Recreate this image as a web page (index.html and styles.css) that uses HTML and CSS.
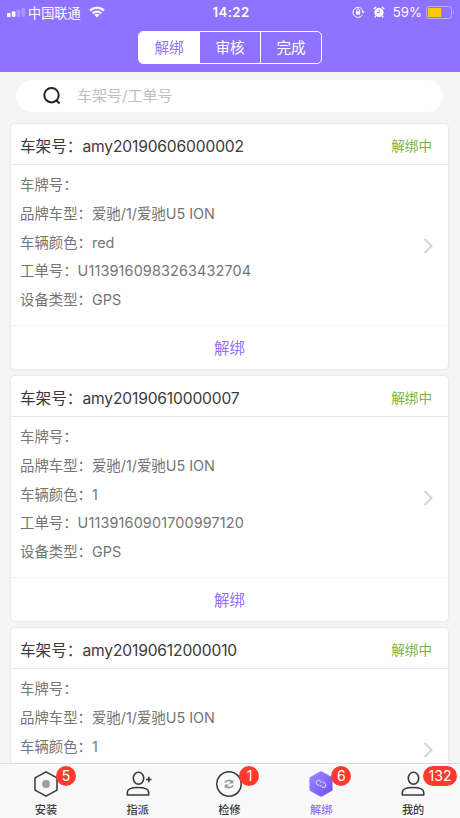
FILE: index.html
```html
<!DOCTYPE html>
<html lang="zh-CN">
<head>
    <meta charset="UTF-8">
    <meta name="viewport" content="width=device-width, initial-scale=1.0">
    <title>解绑</title>
    <link rel="stylesheet" href="styles.css">
</head>
<body>
    <header class="header">
        <div class="status-bar">
            <div class="status-left">
                <svg class="signal" width="18" height="9" viewBox="0 0 18 9" fill="#fff">
                    <rect x="0" y="5" width="3.6" height="4" rx="1"/>
                    <rect x="4.8" y="3.2" width="3.6" height="5.8" rx="1"/>
                    <rect x="9.6" y="1.5" width="3.6" height="7.5" rx="1" opacity=".25"/>
                    <rect x="14.4" y="0" width="3.6" height="9" rx="1" opacity=".25"/>
                </svg>
                <span class="carrier">中国联通</span>
                <svg class="wifi" width="16" height="12" viewBox="0 0 16 12" fill="none" stroke="#fff" stroke-width="2.2">
                    <path d="M1 4.6a10 10 0 0 1 14 0"/>
                    <path d="M3.7 7.4a6.1 6.1 0 0 1 8.6 0"/>
                    <path d="M8 11.6L5.5 9.1a3.5 3.5 0 0 1 5 0z" fill="#fff" stroke="none"/>
                </svg>
            </div>
            <span class="time">14:22</span>
            <div class="status-right">
                <svg class="lock" width="13" height="12" viewBox="0 0 13 12" fill="none" stroke="#fff">
                    <path d="M10.4 8.8A5 5 0 1 1 11 6"/>
                    <path d="M9.3 5.4h3.4L11 7.6z" fill="#fff" stroke="none"/>
                    <rect x="4" y="5.3" width="4.2" height="3.3" fill="#fff" stroke="none"/>
                    <path d="M4.8 5.5V4.3a1.3 1.3 0 0 1 2.6 0v1.2"/>
                </svg>
                <svg class="alarm" width="12" height="12" viewBox="0 0 12 12" fill="none">
                    <circle cx="6" cy="6.4" r="4.6" fill="#fff"/>
                    <path d="M.8 3L3 1M11.2 3L9 1M2.8 10l-1 1.3M9.2 10l1 1.3" stroke="#fff" stroke-width="1.5"/>
                    <path d="M6.2 3.7v2.9H4" stroke="#8f72ff"/>
                </svg>
                <span class="percent">59%</span>
                <svg class="battery" width="29" height="13" viewBox="0 0 29 13">
                    <rect x=".5" y=".5" width="25" height="12" rx="2.8" fill="none" stroke="#c0aeff"/>
                    <rect x="2" y="2" width="13.3" height="9" rx="1" fill="#ffc805"/>
                    <path d="M27 4.5q1.5 2 0 4z" fill="#c0aeff"/>
                </svg>
            </div>
        </div>
        <nav class="segment">
            <a class="active">解绑</a>
            <a>审核</a>
            <a>完成</a>
        </nav>
    </header>

    <main class="content">
        <div class="search">
            <svg width="20" height="20" viewBox="0 0 20 20" fill="none" stroke="#222" stroke-width="2">
                <circle cx="9.5" cy="9.2" r="7.2"/>
                <path d="M14.3 14.3l3.3 3.2"/>
            </svg>
            <span>车架号/工单号</span>
        </div>

        <section class="card">
            <div class="card-head">
                <h2>车架号：<b>amy20190606000002</b></h2>
                <span class="state">解绑中</span>
            </div>
            <div class="card-body">
                <div class="info">
                    <p>车牌号：</p>
                    <p>品牌车型：爱驰/1/爱驰U5 ION</p>
                    <p>车辆颜色：red</p>
                    <p>工单号：<span>U1139160983263432704</span></p>
                    <p>设备类型：GPS</p>
                </div>
                <svg class="arrow" width="10" height="16" viewBox="0 0 10 16"><path d="M1.5 1L8.500 8l-7 7"/></svg>
            </div>
            <div class="card-action">解绑</div>
        </section>

        <section class="card">
            <div class="card-head">
                <h2>车架号：<b>amy20190610000007</b></h2>
                <span class="state">解绑中</span>
            </div>
            <div class="card-body">
                <div class="info">
                    <p>车牌号：</p>
                    <p>品牌车型：爱驰/1/爱驰U5 ION</p>
                    <p>车辆颜色：1</p>
                    <p>工单号：<span>U1139160901700997120</span></p>
                    <p>设备类型：GPS</p>
                </div>
                <svg class="arrow" width="10" height="16" viewBox="0 0 10 16"><path d="M1.5 1L8.500 8l-7 7"/></svg>
            </div>
            <div class="card-action">解绑</div>
        </section>

        <section class="card">
            <div class="card-head">
                <h2>车架号：<b>amy20190612000010</b></h2>
                <span class="state">解绑中</span>
            </div>
            <div class="card-body">
                <div class="info">
                    <p>车牌号：</p>
                    <p>品牌车型：爱驰/1/爱驰U5 ION</p>
                    <p>车辆颜色：1</p>
                </div>
                <svg class="arrow" width="10" height="16" viewBox="0 0 10 16"><path d="M1.5 1L8.500 8l-7 7"/></svg>
            </div>
        </section>
    </main>

    <footer class="tabbar">
        <a class="tab">
            <span class="icon">
                <svg width="28" height="28" viewBox="0 0 28 28" fill="none" stroke="#3a3a3c" stroke-width="1.5" stroke-linejoin="round">
                    <path d="M14 1.8l11 6.1v12.2l-11 6.1-11-6.1V7.9z"/>
                    <circle cx="14" cy="14" r="3.9" fill="#9b9b9b" stroke="none"/>
                </svg>
                <i class="badge">5</i>
            </span>
            安装
        </a>
        <a class="tab">
            <span class="icon">
                <svg width="28" height="28" viewBox="0 0 28 28" fill="none" stroke="#3a3a3c" stroke-width="1.6">
                    <ellipse cx="14.5" cy="8.2" rx="5.2" ry="6"/>
                    <path d="M3.3 25v-2.5c0-3.4 4-5 10.700-5s10.700 1.6 10.700 5V25z" stroke-linejoin="round"/>
                    <path d="M22 9.5h5.5M24.8 6.8v5.5"/>
                </svg>
            </span>
            指派
        </a>
        <a class="tab">
            <span class="icon">
                <svg width="28" height="28" viewBox="0 0 28 28" fill="none">
                    <circle cx="14" cy="14" r="12.2" stroke="#3a3a3c" stroke-width="1.5"/>
                    <path d="M9.8 12.700c1.500-2.600 4.600-3 7-1.200M18.200 15.300c-1.500 2.600-4.600 3-7 1.200" stroke="#999" stroke-width="1.600"/>
                    <path d="M18.300 9.500v4h-4.500zM9.700 18.500v-4h4.500z" fill="#999"/>
                </svg>
                <i class="badge">1</i>
            </span>
            检修
        </a>
        <a class="tab active">
            <span class="icon">
                <svg width="28" height="28" viewBox="0 0 28 28" fill="none">
                    <defs>
                        <linearGradient id="hex" x1="0" y1="0" x2="1" y2="1">
                            <stop offset="0" stop-color="#9d8aff"/>
                            <stop offset="1" stop-color="#714bf5"/>
                        </linearGradient>
                    </defs>
                    <path d="M14 2l10.8 6v12L14 26 3.2 20V8z" fill="url(#hex)" stroke="url(#hex)" stroke-width="1.5" stroke-linejoin="round"/>
                    <path d="M14.8 12.5l-1.900-1.700a2.200 2.200 0 0 0-3.200 3l1.700 1.500h1.400M13.200 15.100l1.900 1.700a2.200 2.200 0 0 0 3.200-3l-1.700-1.500h-.8" stroke="#d9d0ff" stroke-width="1.100"/>
                </svg>
                <i class="badge">6</i>
            </span>
            解绑
        </a>
        <a class="tab">
            <span class="icon">
                <svg width="28" height="28" viewBox="0 0 28 28" fill="none" stroke="#3a3a3c" stroke-width="1.6">
                    <ellipse cx="14.5" cy="8.2" rx="5.2" ry="6"/>
                    <path d="M3.3 25v-2.5c0-3.4 4-5 10.700-5s10.700 1.6 10.700 5V25z" stroke-linejoin="round"/>
                </svg>
                <i class="badge">132</i>
            </span>
            我的
        </a>
    </footer>
</body>
</html>
```
FILE: styles.css
```css
* {
    box-sizing: border-box;
}
body {
    display: flex;
    flex-direction: column;
    height: 818px;
    margin: 0;
    overflow: hidden;
    background-color: #f5f5f5;
    font-family: Inter, "Noto Sans CJK SC", sans-serif;
    color: #3a3a3c;
}
.header {
    flex: none;
    height: 72px;
    background-color: #8f72ff;
    color: #fff;
}
.status-bar {
    display: grid;
    grid-template-columns: 1fr auto 1fr;
    align-items: center;
    height: 24px;
    padding: 0 5px 0 7px;
    font-size: 13.2px;
}
.status-left, .status-right {
    display: flex;
    align-items: center;
}
.status-right {
    justify-content: flex-end;
}
.carrier {
    margin-left: 3px;
}
.wifi {
    margin-left: 8px;
}
.time {
    font-weight: 600;
    letter-spacing: 0.4px;
}
.alarm {
    margin-left: 8px;
}
.percent {
    margin-left: 8px;
}
.battery {
    margin-left: 4px;
}
.segment {
    display: flex;
    width: 184px;
    height: 33px;
    margin: 7px auto 0;
    border: 1px solid #fff;
    border-radius: 5px;
    overflow: hidden;
    font-size: 14.6px;
    line-height: 32px;
    text-align: center;
}
.segment a {
    flex: 1;
}
.segment a + a {
    border-left: 1px solid #fff;
}
.segment .active {
    background-color: #fff;
    color: #8f72ff;
}
.content {
    flex: 1;
    min-height: 0;
    padding: 8px 12px 0 11px;
    overflow: hidden;
}
.search {
    display: flex;
    align-items: center;
    height: 32px;
    margin: 0 5px 12px;
    padding-left: 26px;
    border-radius: 16px;
    background-color: #fff;
    color: #c0c0c0;
    font-size: 15px;
}
.search span {
    margin-left: 15px;
    padding-bottom: 3px;
}
.card {
    height: 245px;
    margin-bottom: 7px;
    border-radius: 4px;
    background-color: #fff;
    box-shadow: 0 0 2px rgba(0,0,0,0.15);
}
.card-head {
    display: flex;
    align-items: center;
    justify-content: space-between;
    height: 41px;
    padding: 2px 16px 0 9px;
    border-bottom: 1px solid #e8e8e8;
}
.card-head h2 {
    margin: 0;
    font-size: 15.6px;
    font-weight: normal;
}
.card-head b {
    font-weight: normal;
    letter-spacing: -0.15px;
}
.state {
    color: #7ab548;
    font-size: 13.6px;
}
.card-body {
    display: flex;
    align-items: center;
    justify-content: space-between;
    height: 161px;
    padding: 2px 15px 0 9px;
    border-bottom: 1px solid #f3f3f3;
}
.info {
    align-self: flex-start;
    padding-top: 4px;
    color: #757575;
    font-size: 14.4px;
    line-height: 28.8px;
}
.info p {
    margin: 0;
}
.info span {
    letter-spacing: 0.15px;
}
.arrow {
    fill: none;
    stroke: #d5d5d5;
    stroke-width: 2;
}
.card-action {
    height: 43px;
    color: #8f72ff;
    font-size: 15.4px;
    line-height: 45px;
    text-align: center;
}
.tabbar {
    display: flex;
    flex: none;
    height: 55px;
    padding-right: 1px;
    border-top: 1px solid #dcdcdc;
    background-color: #f9f9f9;
}
.tab {
    display: flex;
    flex: 1;
    flex-direction: column;
    align-items: center;
    padding-top: 6px;
    font-size: 11.2px;
    font-weight: 500;
    line-height: 25px;
}
.tab.active {
    color: #8f72ff;
}
.icon {
    position: relative;
    height: 28px;
}
.icon svg {
    display: block;
}
.badge {
    position: absolute;
    top: -4px;
    left: 24px;
    min-width: 20px;
    height: 20px;
    padding: 0 5.5px;
    border-radius: 10px;
    background-color: #ff3b30;
    color: #fff;
    font-size: 14px;
    font-style: normal;
    font-weight: normal;
    line-height: 20px;
    text-align: center;
}
```
